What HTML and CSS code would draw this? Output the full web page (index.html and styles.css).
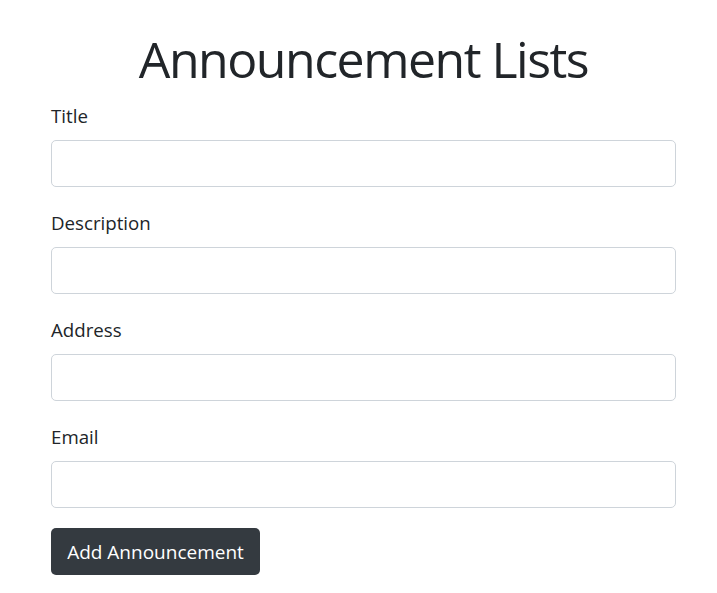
FILE: index.html
```html
<!DOCTYPE html>
<html lang="en">
<head>
<meta charset="utf-8">
<title>Announcement Lists</title>
<link rel="stylesheet" href="styles.css">
</head>
<body>
<div class="container">
  <h1 class="title">Announcement Lists</h1>
  <form class="form">
    <div class="group">
      <label class="label" for="t">Title</label>
      <input class="input" id="t" type="text">
    </div>
    <div class="group">
      <label class="label" for="d">Description</label>
      <input class="input" id="d" type="text">
    </div>
    <div class="group">
      <label class="label" for="a">Address</label>
      <input class="input" id="a" type="text">
    </div>
    <div class="group">
      <label class="label" for="e">Email</label>
      <input class="input" id="e" type="text">
    </div>
    <button class="btn" type="button">Add Announcement</button>
  </form>
</div>
</body>
</html>
```
FILE: styles.css
```css
* { box-sizing: border-box; }
html, body { margin: 0; padding: 0; background: #fff; }
body {
  font-family: "Open Sans", "Noto Sans", sans-serif;
  color: #212529;
}
.container {
  width: 625px;
  margin-left: 51px;
  padding-top: 25px;
}
.title {
  margin: 0 0 9px;
  text-align: center;
  font-size: 50px;
  letter-spacing: -1.5px;
  font-weight: 400;
  line-height: 68px;
}
.form { display: flex; flex-direction: column; }
.group { display: flex; flex-direction: column; margin-bottom: 22px; }
.label {
  font-size: 18.7px;
  line-height: 28px;
  margin-bottom: 10px;
}
.input {
  height: 47px;
  border: 1px solid #ced4da;
  border-radius: 5px;
  font-size: 20px;
  padding: 8px 16px;
  font-family: inherit;
}
.btn {
  align-self: flex-start;
  margin-top: -2px;
  height: 47px;
  width: 209px;
  border: none;
  border-radius: 5px;
  background: #343a40;
  color: #fff;
  font-family: inherit;
  font-size: 19px;
  padding: 0 12px;
  white-space: nowrap;
}
```
